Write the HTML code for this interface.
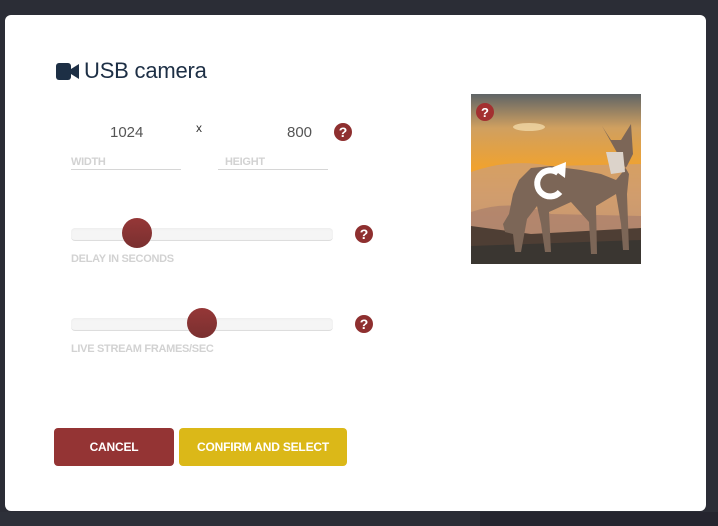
<!DOCTYPE html>
<html><head><style>
body{margin:0;width:718px;height:526px;background:#2b2d36;position:relative;overflow:hidden;font-family:"Liberation Sans",sans-serif}
.a{position:absolute}
.modal{left:5px;top:15px;width:701px;height:496px;background:#fff;border-radius:6px}
.lbl{font-size:11px;font-weight:bold;color:#d2d2d2;letter-spacing:-0.3px}
.line{height:1px;background:#d6d6d6}
.track{height:12px;background:#f5f5f5;border-radius:4px;border-bottom:1px solid #ddd;box-shadow:inset 0 1px 2px rgba(0,0,0,.04)}
.thumb{width:30px;height:30px;border-radius:50%;background:linear-gradient(#953737,#7a3030)}
.help{width:18px;height:18px;border-radius:50%;background:#8e2f2f;color:#fff;font-weight:bold;font-size:14px;line-height:18px;text-align:center}
.btn{height:38px;border-radius:4px;color:#fff;font-weight:bold;font-size:12px;line-height:38px;text-align:center;letter-spacing:-0.2px}
</style></head><body>
<div class="a" style="left:0;top:512px;width:240px;height:14px;background:#2d3039"></div>
<div class="a" style="left:480px;top:512px;width:238px;height:14px;background:#25252f"></div>
<div class="a modal"></div>
<svg class="a" style="left:56px;top:63px" width="23" height="17" viewBox="0 0 23 17"><rect x="0" y="0" width="15" height="17" rx="3" fill="#1d2f45"/><path d="M15 6 L23 1 V16 L15 11Z" fill="#1d2f45"/></svg>
<div class="a" style="left:84px;top:58px;font-size:22px;color:#1d2f45;letter-spacing:-0.2px">USB camera</div>
<div class="a" style="left:110px;top:124px;font-size:15px;color:#555">1024</div>
<div class="a" style="left:196px;top:121px;font-size:12px;color:#333">x</div>
<div class="a" style="left:287px;top:124px;font-size:15px;color:#555">800</div>
<div class="a help" style="left:334px;top:123px">?</div>
<div class="a lbl" style="left:71px;top:156px">WIDTH</div>
<div class="a line" style="left:71px;top:169px;width:110px"></div>
<div class="a lbl" style="left:225px;top:156px">HEIGHT</div>
<div class="a line" style="left:218px;top:169px;width:110px"></div>
<div class="a track" style="left:71px;top:228px;width:262px"></div>
<div class="a thumb" style="left:122px;top:218px"></div>
<div class="a help" style="left:355px;top:225px">?</div>
<div class="a lbl" style="left:71px;top:253px">DELAY IN SECONDS</div>
<div class="a track" style="left:71px;top:318px;width:262px"></div>
<div class="a thumb" style="left:187px;top:308px"></div>
<div class="a help" style="left:355px;top:315px">?</div>
<div class="a lbl" style="left:71px;top:343px">LIVE STREAM FRAMES/SEC</div>
<div class="a btn" style="left:54px;top:428px;width:120px;background:#943434">CANCEL</div>
<div class="a btn" style="left:179px;top:428px;width:168px;background:#dbb818">CONFIRM AND SELECT</div>
<svg class="a" style="left:471px;top:94px" width="170" height="170" viewBox="0 0 170 170">
<defs><linearGradient id="s" x1="0" y1="0" x2="0" y2="1"><stop offset="0" stop-color="#5f6466"/><stop offset=".2" stop-color="#d0a060"/><stop offset=".45" stop-color="#f2a22c"/><stop offset=".6" stop-color="#e39a48"/><stop offset="1" stop-color="#a87a62"/></linearGradient></defs>
<rect width="170" height="170" fill="url(#s)"/>
<ellipse cx="58" cy="33" rx="16" ry="4" fill="#f0d8a8" opacity=".8"/>
<path d="M0 78 Q40 64 80 72 L170 70 V170 H0Z" fill="#c99e7e" opacity=".7"/>
<path d="M0 118 Q40 104 80 120 L170 122 V170 H0Z" fill="#a37a6a" opacity=".6"/>
<path d="M0 132 L60 140 L170 134 V170 H0Z" fill="#4e3e34"/>
<path d="M0 152 L170 146 V170 H0Z" fill="#3a3631"/>
<path d="M131 32 L140 46 L150 46 L160 30 L162 60 L156 72 L150 80 L145 86 L130 80 L110 76 L80 72 L60 74 L48 86 L42 100 L38 120 L32 130 L34 138 L42 140 L44 158 L50 158 L56 125 L66 112 L70 130 L74 158 L80 158 L78 118 L100 108 L118 128 L120 160 L126 160 L125 112 L145 100 L150 130 L152 156 L158 156 L156 100 L158 80 Z" fill="#7c6657"/>
<path d="M135 58 L152 58 L154 78 L140 80Z" fill="#dcd3ca"/>
<circle cx="14" cy="18" r="9" fill="#a33030"/><text x="14" y="23" font-size="13" font-weight="bold" fill="#fff" text-anchor="middle" font-family="Liberation Sans">?</text>
<path d="M87 79 A13 13 0 1 0 89 98" fill="none" stroke="#fff" stroke-width="6"/>
<path d="M80 74 L95 68 L94 84Z" fill="#fff"/>
</svg>
</body></html>
